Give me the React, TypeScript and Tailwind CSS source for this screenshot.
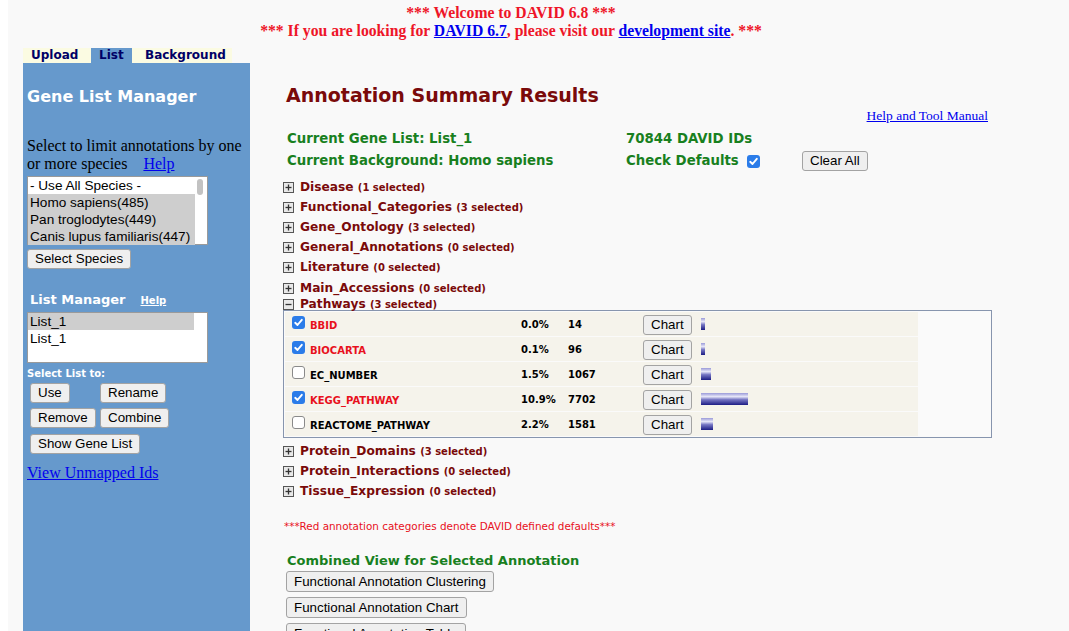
import React from "react";

const verd = { fontFamily: '"DejaVu Sans", Verdana, sans-serif' };
const serif = { fontFamily: '"Liberation Serif", "Times New Roman", serif' };
const arial = { fontFamily: '"Liberation Sans", Arial, sans-serif' };

function Btn({ children, className = "" }: { children: React.ReactNode; className?: string }) {
  return (
    <button
      className={`h-[20px] px-[7px] bg-[#efefef] border border-[#a3a3a3] rounded-[3px] text-[13.33px] leading-[18px] font-normal text-black ${className}`}
      style={arial}
    >
      {children}
    </button>
  );
}

function Check({ on }: { on: boolean }) {
  return on ? (
    <span className="inline-flex w-[13px] h-[13px] rounded-[3px] bg-[#2b7ce9] items-center justify-center">
      <svg width="11" height="11" viewBox="0 0 11 11">
        <path d="M2.2 5.8 L4.5 8 L8.8 2.8" stroke="white" strokeWidth="1.9" fill="none" strokeLinecap="round" strokeLinejoin="round" />
      </svg>
    </span>
  ) : (
    <span className="inline-block w-[13px] h-[13px] rounded-[3px] bg-white border border-[#8a8a8a]" />
  );
}

function Box({ open }: { open?: boolean }) {
  return (
    <svg width="11" height="11" viewBox="0 0 11 11" className="shrink-0">
      <rect x="0.5" y="0.5" width="10" height="10" fill="#e8e8e8" stroke="#555" />
      <line x1="2.5" y1="5.5" x2="8.5" y2="5.5" stroke="#333" strokeWidth="1.3" />
      {!open && <line x1="5.5" y1="2.5" x2="5.5" y2="8.5" stroke="#333" strokeWidth="1.3" />}
    </svg>
  );
}

function Cat({ name, n, open, className = "" }: { name: string; n: number; open?: boolean; className?: string }) {
  return (
    <div className={`flex items-center gap-[6px] ${className}`}>
      <Box open={open} />
      <span className="text-[12.2px] font-bold text-[#7a0a0a]" style={verd}>
        {name} <span className="text-[10px]">({n} selected)</span>
      </span>
    </div>
  );
}

const rows = [
  { name: "BBID", pct: "0.0%", n: "14", on: true, w: 4 },
  { name: "BIOCARTA", pct: "0.1%", n: "96", on: true, w: 4 },
  { name: "EC_NUMBER", pct: "1.5%", n: "1067", on: false, w: 10 },
  { name: "KEGG_PATHWAY", pct: "10.9%", n: "7702", on: true, w: 47 },
  { name: "REACTOME_PATHWAY", pct: "2.2%", n: "1581", on: false, w: 12 },
];

export default function App() {
  return (
    <div className="h-[631px] overflow-hidden bg-[#f9f9f9] border-l-[8px] border-white">
      <header
        className="w-[1006px] h-[48px] pt-[4px] text-center font-bold text-[15.7px] leading-[18px] text-[#ee1528]"
        style={serif}
      >
        <div>*** Welcome to DAVID 6.8 ***</div>
        <div>
          *** If you are looking for <a className="text-[#0000ee] underline">DAVID 6.7</a>, please visit our{" "}
          <a className="text-[#0000ee] underline">development site</a>. ***
        </div>
      </header>
      <div className="flex h-[583px]">
        {/* Sidebar */}
        <aside className="ml-[15px] w-[227px] flex flex-col">
          <div className="flex h-[15px] text-[12px] font-bold leading-[15px] text-[#000066]" style={verd}>
            <div className="w-[68px] bg-[#fbfbe2] pl-[8px]">Upload</div>
            <div className="w-[41px] bg-[#6699cc] pl-[8px]">List</div>
            <div className="w-[100px] bg-[#fbfbe2] pl-[13px]">Background</div>
          </div>
          <div className="flex-1 bg-[#6699cc] pl-[4px] pt-[24px]">
            <div className="text-[16px] leading-[20px] font-bold text-white" style={verd}>
              Gene List Manager
            </div>
            <div className="mt-[30px] text-[16px] leading-[18px] text-black" style={serif}>
              Select to limit annotations by one or more species&nbsp;&nbsp;&nbsp;&nbsp;
              <a className="text-[#0000ee] underline">Help</a>
            </div>
            <div className="mt-[3px] w-[181px] h-[69px] bg-white border border-[#9a9a9a] relative text-[13.6px] leading-[17px] text-black" style={arial}>
              <div className="w-[167px] pl-[2px] bg-white">- Use All Species -</div>
              <div className="w-[167px] pl-[2px] bg-[#cecece]">Homo sapiens(485)</div>
              <div className="w-[167px] pl-[2px] bg-[#cecece]">Pan troglodytes(449)</div>
              <div className="w-[167px] pl-[2px] bg-[#cecece]">Canis lupus familiaris(447)</div>
              <div className="absolute right-[4px] top-[2px] w-[6px] h-[16px] rounded-full bg-[#c2c2c2]" />
            </div>
            <Btn className="mt-[2px] h-[19px] leading-[17px]">Select Species</Btn>
            <div className="mt-[22px] pl-[3px] flex items-baseline gap-[15px] text-white font-bold" style={verd}>
              <span className="text-[13px] leading-[18px]">List Manager</span>
              <a className="text-[10px] underline">Help</a>
            </div>
            <div className="mt-[3px] w-[181px] h-[51px] bg-white border border-[#9a9a9a] text-[13.6px] leading-[17px] text-black" style={arial}>
              <div className="w-[166px] pl-[2px] bg-[#cecece]">List_1</div>
              <div className="w-[166px] pl-[2px]">List_1</div>
            </div>
            <div className="mt-[4px] text-[10px] leading-[14px] font-bold text-white" style={verd}>
              Select List to:
            </div>
            <div className="grid grid-cols-[70px_auto] gap-y-[5px] pl-[3px] mt-[2px] justify-start">
              <Btn className="justify-self-start">Use</Btn>
              <Btn className="justify-self-start">Rename</Btn>
              <Btn className="justify-self-start">Remove</Btn>
              <Btn className="justify-self-start">Combine</Btn>
            </div>
            <Btn className="mt-[6px] ml-[3px]">Show Gene List</Btn>
            <div className="mt-[10px] text-[16px] leading-[18px]" style={serif}>
              <a className="text-[#0000ee] underline">View Unmapped Ids</a>
            </div>
          </div>
        </aside>

        {/* Main */}
        <main className="flex-1 pl-[33px] pt-[35px]">
          <h1 className="pl-[3px] text-[19px] leading-[24px] font-bold text-[#7a0a0a]" style={verd}>
            Annotation Summary Results
          </h1>
          <div className="w-[705px] text-right text-[13.5px] leading-[15px] mt-[1px]" style={serif}>
            <a className="text-[#0000ee] underline">Help and Tool Manual</a>
          </div>
          <div className="mt-[5px] pl-[4px] grid grid-cols-[339px_176px_auto] items-center text-[13.3px] font-bold text-[#18801e]" style={verd}>
            <div className="h-[22px] leading-[22px]">Current Gene List: List_1</div>
            <div className="h-[22px] leading-[22px]">70844 DAVID IDs</div>
            <div />
            <div className="h-[22px] leading-[22px]">Current Background: Homo sapiens</div>
            <div className="h-[22px] flex items-center gap-[8px]">
              Check Defaults <Check on />
            </div>
            <div className="h-[22px] flex items-center -mt-[1px]">
              <Btn>Clear All</Btn>
            </div>
          </div>
          <div className="mt-[5px]">
            <Cat name="Disease" n={1} className="h-[20px]" />
            <Cat name="Functional_Categories" n={3} className="h-[20px]" />
            <Cat name="Gene_Ontology" n={3} className="h-[20px]" />
            <Cat name="General_Annotations" n={0} className="h-[20px]" />
            <Cat name="Literature" n={0} className="h-[20px]" />
            <Cat name="Main_Accessions" n={0} className="h-[20px] mt-[1px]" />
            <Cat name="Pathways" n={3} open className="h-[12px]" />
          </div>
          <div className="w-[709px] h-[128px] border border-[#8795ae] bg-[#fafafa] pt-[1px] pl-[1px] flex flex-col gap-[1px]">
            {rows.map((r) => (
              <div key={r.name} className="h-[24px] w-[633px] bg-[#f5f3eb] flex items-center" style={verd}>
                <div className="w-[23px] pl-[7px] flex items-center -mt-[4px]">
                  <Check on={r.on} />
                </div>
                <div className={`w-[213px] pl-[2px] text-[10px] font-bold pt-[3px] ${r.on ? "text-[#e8101c]" : "text-black"}`}>
                  {r.name}
                </div>
                <div className="w-[47px] text-[10px] font-bold text-black">{r.pct}</div>
                <div className="w-[75px] text-[10px] font-bold text-black">{r.n}</div>
                <div className="w-[58px]">
                  <Btn>Chart</Btn>
                </div>
                <div className="flex-1">
                  <div
                    className="h-[12px] bg-[linear-gradient(to_bottom,#9a9ad8_0%,#e6e6f8_30%,#7777c4_55%,#1c1c84_100%)]"
                    style={{ width: r.w }}
                  />
                </div>
              </div>
            ))}
          </div>
          <div className="mt-[3px]">
            <Cat name="Protein_Domains" n={3} className="h-[20px]" />
            <Cat name="Protein_Interactions" n={0} className="h-[20px]" />
            <Cat name="Tissue_Expression" n={0} className="h-[20px]" />
          </div>
          <div className="mt-[18px] pl-[1px] text-[10.4px] leading-[14px] text-[#e8101c]" style={verd}>
            ***Red annotation categories denote DAVID defined defaults***
          </div>
          <div className="mt-[19px] pl-[4px] text-[13px] leading-[18px] font-bold text-[#18801e]" style={verd}>
            Combined View for Selected Annotation
          </div>
          <div className="flex flex-col items-start gap-[5px] pl-[3px] mt-[1px]">
            <Btn className="h-[21px]">Functional Annotation Clustering</Btn>
            <Btn className="h-[21px]">Functional Annotation Chart</Btn>
            <Btn className="h-[21px]">Functional Annotation Table</Btn>
          </div>
        </main>
      </div>
    </div>
  );
}
